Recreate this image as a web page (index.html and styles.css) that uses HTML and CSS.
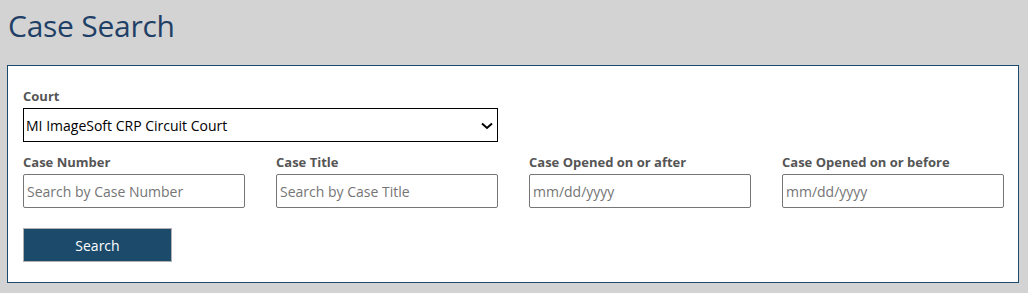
FILE: index.html
```html
<!DOCTYPE html>
<html>
<head>
<meta charset="utf-8">
<link rel="stylesheet" href="styles.css">
</head>
<body>
<h1 class="title">Case Search</h1>
<form class="panel">
  <div class="grid">
    <div class="field span2">
      <label class="label">Court</label>
      <div class="select">
        <span>MI ImageSoft CRP Circuit Court</span>
        <svg class="chev" width="12" height="8" viewBox="0 0 12 8"><path d="M1 1.5 L6 6 L11 1.5" fill="none" stroke="#000" stroke-width="2"/></svg>
      </div>
    </div>
    <div class="field">
      <label class="label">Case Number</label>
      <input class="input" placeholder="Search by Case Number">
    </div>
    <div class="field">
      <label class="label">Case Title</label>
      <input class="input" placeholder="Search by Case Title">
    </div>
    <div class="field">
      <label class="label">Case Opened on or after</label>
      <input class="input" placeholder="mm/dd/yyyy">
    </div>
    <div class="field">
      <label class="label">Case Opened on or before</label>
      <input class="input" placeholder="mm/dd/yyyy">
    </div>
  </div>
  <button type="button" class="btn">Search</button>
</form>
</body>
</html>
```
FILE: styles.css
```css
html, body { margin: 0; padding: 0; }
body {
  background: #d3d3d3;
  font-family: "Open Sans", "Noto Sans", sans-serif;
  padding: 0 9px 0 7px;
}
.title {
  margin: 0;
  padding: 6px 0 0 1px;
  height: 65px;
  box-sizing: border-box;
  font-weight: 400;
  font-size: 30px;
  color: #1f3f66;
  line-height: 40px;
  letter-spacing: -0.25px;
}
.panel {
  background: #fff;
  border: 1px solid #1b4a6b;
  padding: 21px 15px 20px 15px;
  height: 218px;
  box-sizing: border-box;
}
.grid {
  display: grid;
  grid-template-columns: 222px 222px 222px 222px;
  column-gap: 31px;
  row-gap: 11px;
}
.span2 { grid-column: 1 / span 4; }
.field { display: flex; flex-direction: column; }
.label {
  font-size: 13px;
  font-weight: 700;
  color: #555;
  line-height: 18px;
  margin-bottom: 3px;
}
.select {
  width: 475px;
  height: 34px;
  box-sizing: border-box;
  border: 1px solid #000;
  display: flex;
  align-items: center;
  justify-content: space-between;
  padding: 0 4px 0 2px;
  font-size: 14px;
  color: #000;
}
.chev { margin-top: 2px; }
.input {
  width: 222px;
  height: 34px;
  box-sizing: border-box;
  border: 1px solid #767676;
  border-radius: 2px;
  padding: 0 3px;
  font-family: inherit;
  font-size: 14px;
  color: #333;
  outline: none;
}
.input::placeholder { color: #757575; }
.btn {
  margin-top: 20px;
  width: 149px;
  height: 34px;
  background: #1b4a6b;
  color: #fff;
  border: 1px solid #b0b0b0;
  font-family: inherit;
  font-size: 14px;
  padding: 0;
}
```
